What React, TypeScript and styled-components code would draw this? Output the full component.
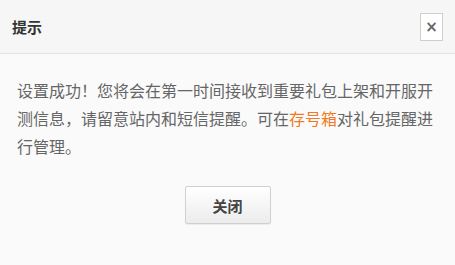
import React from "react";
import styled, { createGlobalStyle } from "styled-components";

const GlobalStyle = createGlobalStyle`
  html, body {
    margin: 0;
    padding: 0;
    background: #fafafa;
  }
  body {
    font-family: "Microsoft YaHei", "Noto Sans CJK SC", sans-serif;
  }
`;

const Dialog = styled.div`
  width: 455px;
  height: 265px;
  background: #fafafa;
  display: flex;
  flex-direction: column;
`;

const Header = styled.div`
  height: 53px;
  background: #f6f6f6;
  border-bottom: 1px solid #e3e3e3;
  display: flex;
  align-items: center;
  justify-content: space-between;
  padding: 0 12px 0 12px;
  box-sizing: content-box;
`;

const Title = styled.h3`
  margin: 0;
  font-size: 15px;
  font-weight: bold;
  color: #333;
  padding-bottom: 1px;
`;

const CloseBox = styled.button`
  width: 23px;
  height: 28px;
  margin-top: 1px;
  padding: 0;
  border: 1px solid #cfcfcf;
  background: #fff;
  color: #666;
  font-family: "DejaVu Sans", sans-serif;
  font-size: 15px;
  font-weight: bold;
  line-height: 24px;
  cursor: pointer;
`;

const Body = styled.div`
  padding: 22px 20px 0 17px;
  font-size: 16px;
  line-height: 28px;
  color: #666;
`;

const Link = styled.span`
  color: #f27a25;
`;

const Footer = styled.div`
  display: flex;
  justify-content: center;
  padding-top: 26px;
`;

const Button = styled.button`
  width: 86px;
  height: 38px;
  border: 1px solid #d0d0d0;
  border-radius: 2px;
  background: linear-gradient(#ffffff, #ececec);
  font-family: "Noto Sans CJK SC", sans-serif;
  font-size: 15px;
  font-weight: bold;
  color: #444;
  cursor: pointer;
  box-shadow: 0 1px 1px rgba(0, 0, 0, 0.06);
`;

export default function App() {
  return (
    <>
      <GlobalStyle />
      <Dialog>
        <Header>
          <Title>提示</Title>
          <CloseBox>×</CloseBox>
        </Header>
        <Body>
          设置成功！您将会在第一时间接收到重要礼包上架和开服开测信息，请留意站内和短信提醒。可在
          <Link>存号箱</Link>对礼包提醒进行管理。
        </Body>
        <Footer>
          <Button>关闭</Button>
        </Footer>
      </Dialog>
    </>
  );
}
